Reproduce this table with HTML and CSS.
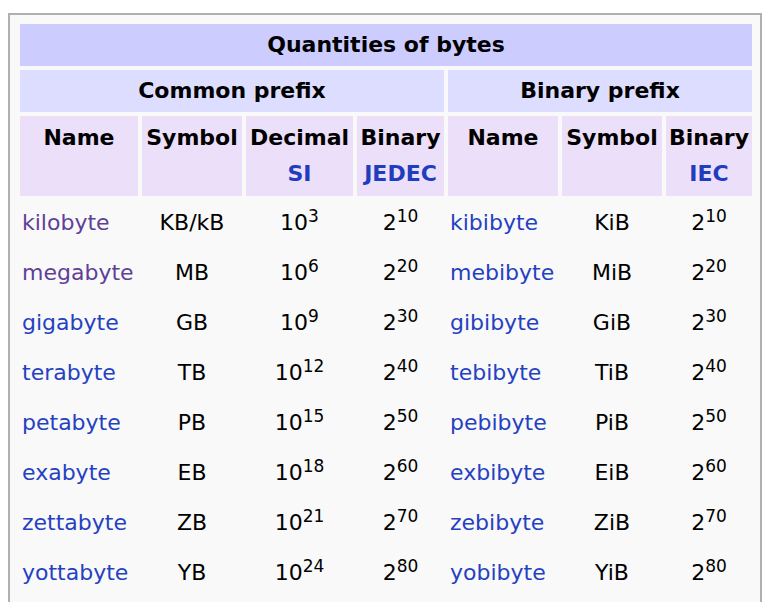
FILE: index.html
```html
<!DOCTYPE html>
<html>
<head>
<meta charset="utf-8">
<link rel="stylesheet" href="styles.css">
</head>
<body>
<table class="bytes">
  <colgroup>
    <col class="c-name"><col class="c-sym"><col class="c-dec"><col class="c-bin">
    <col class="c-name2"><col class="c-sym2"><col class="c-bin2">
  </colgroup>
  <tr><th colspan="7" class="title">Quantities of bytes</th></tr>
  <tr><th colspan="4" class="sub">Common prefix</th><th colspan="3" class="sub">Binary prefix</th></tr>
  <tr class="heads">
    <th>Name</th><th>Symbol</th><th>Decimal<br><a>SI</a></th><th>Binary<br><a>JEDEC</a></th>
    <th>Name</th><th>Symbol</th><th>Binary<br><a>IEC</a></th>
  </tr>
  <tr><td class="n"><a class="v">kilobyte</a></td><td>KB/kB</td><td>10<sup>3</sup></td><td>2<sup>10</sup></td><td class="n"><a>kibibyte</a></td><td>KiB</td><td>2<sup>10</sup></td></tr>
  <tr><td class="n"><a class="v">megabyte</a></td><td>MB</td><td>10<sup>6</sup></td><td>2<sup>20</sup></td><td class="n"><a>mebibyte</a></td><td>MiB</td><td>2<sup>20</sup></td></tr>
  <tr><td class="n"><a>gigabyte</a></td><td>GB</td><td>10<sup>9</sup></td><td>2<sup>30</sup></td><td class="n"><a>gibibyte</a></td><td>GiB</td><td>2<sup>30</sup></td></tr>
  <tr><td class="n"><a>terabyte</a></td><td>TB</td><td>10<sup>12</sup></td><td>2<sup>40</sup></td><td class="n"><a>tebibyte</a></td><td>TiB</td><td>2<sup>40</sup></td></tr>
  <tr><td class="n"><a>petabyte</a></td><td>PB</td><td>10<sup>15</sup></td><td>2<sup>50</sup></td><td class="n"><a>pebibyte</a></td><td>PiB</td><td>2<sup>50</sup></td></tr>
  <tr><td class="n"><a>exabyte</a></td><td>EB</td><td>10<sup>18</sup></td><td>2<sup>60</sup></td><td class="n"><a>exbibyte</a></td><td>EiB</td><td>2<sup>60</sup></td></tr>
  <tr><td class="n"><a>zettabyte</a></td><td>ZB</td><td>10<sup>21</sup></td><td>2<sup>70</sup></td><td class="n"><a>zebibyte</a></td><td>ZiB</td><td>2<sup>70</sup></td></tr>
  <tr><td class="n"><a>yottabyte</a></td><td>YB</td><td>10<sup>24</sup></td><td>2<sup>80</sup></td><td class="n"><a>yobibyte</a></td><td>YiB</td><td>2<sup>80</sup></td></tr>
</table>
</body>
</html>
```
FILE: styles.css
```css
html, body {
  margin: 0;
  padding: 0;
  background: #ffffff;
}
body {
  font-family: "DejaVu Sans", Verdana, sans-serif;
  font-size: 22px;
  color: #000;
}
.bytes {
  margin: 13px 0 0 8px;
  width: 754px;
  table-layout: fixed;
  border: 2px solid #b0b0b0;
  background: #f9f9f9;
  border-collapse: separate;
  border-spacing: 4px;
  padding: 5px 4px 20px 6px;
  box-sizing: border-box;
}
.c-name { width: 118px; }
.c-sym { width: 100px; }
.c-dec { width: 107px; }
.c-bin { width: 87px; }
.c-name2 { width: 110px; }
.c-sym2 { width: 100px; }
.c-bin2 { width: 86px; }
th, td {
  padding: 0;
  white-space: nowrap;
  overflow: visible;
}
th {
  font-weight: bold;
  text-align: center;
}
.title {
  background: #ccccff;
  height: 42px;
  line-height: 42px;
}
.sub {
  background: #ddddff;
  height: 42px;
  line-height: 42px;
}
.heads th {
  background: #ecdff9;
  vertical-align: top;
  line-height: 36px;
  height: 80px;
  padding-top: 4px;
  box-sizing: border-box;
}
.heads a {
  color: #1f3dbd;
}
td {
  text-align: center;
  height: 46px;
  line-height: 30px;
  vertical-align: middle;
}
td.n {
  text-align: left;
  padding-left: 2px;
}
a {
  color: #2541c2;
  text-decoration: none;
}
a.v {
  color: #5f3f98;
}
sup {
  font-size: 17px;
  line-height: 0;
  vertical-align: 8px;
}
```
